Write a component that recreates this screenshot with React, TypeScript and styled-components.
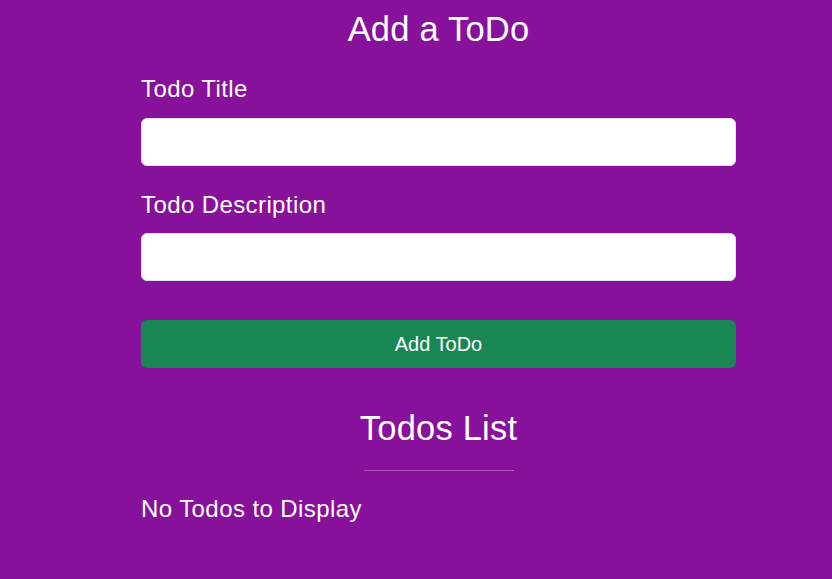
import React from "react";
import styled, { createGlobalStyle } from "styled-components";

const Global = createGlobalStyle`
  html, body {
    margin: 0;
    padding: 0;
    background: #87119a;
    font-family: "Liberation Sans", Arial, sans-serif;
    color: #ffffff;
  }
  * { box-sizing: border-box; }
`;

const Page = styled.div`
  min-height: 579px;
  background: #87119a;
  padding-left: 141px;
  padding-top: 9px;
`;

const Container = styled.div`
  width: 595px;
  display: flex;
  flex-direction: column;
`;

const Heading = styled.h1<{ $top?: number }>`
  margin: ${(p) => p.$top ?? 0}px 0 0;
  font-size: 34.5px;
  font-weight: 400;
  line-height: 41.4px;
  letter-spacing: 0.2px;
  text-align: center;
`;

const Label = styled.label<{ $top: number }>`
  display: block;
  margin-top: ${(p) => p.$top}px;
  font-size: 24px;
  line-height: 36px;
  letter-spacing: 0.4px;
`;

const Input = styled.input`
  display: block;
  width: 100%;
  height: 48px;
  margin-top: 10.6px;
  padding: 8px 16px;
  font-size: 20px;
  font-family: inherit;
  background: #ffffff;
  border: 1px solid #dee2e6;
  border-radius: 6px;
  outline: none;
`;

const Button = styled.button`
  width: 100%;
  height: 48px;
  margin-top: 39px;
  background: #198754;
  color: #ffffff;
  border: none;
  border-radius: 6px;
  font-family: inherit;
  font-size: 20px;
  cursor: pointer;
`;

const Divider = styled.hr`
  width: 150px;
  margin: 20px auto 0;
  border: 0;
  border-top: 1px solid rgba(255, 255, 255, 0.3);
  height: 0;
`;

const Empty = styled.p`
  margin: 20px 0 0;
  font-size: 24px;
  line-height: 36px;
  letter-spacing: 0.42px;
`;

export default function App() {
  return (
    <>
      <Global />
      <Page>
        <Container>
          <Heading>Add a ToDo</Heading>
          <Label $top={21} htmlFor="title">Todo Title</Label>
          <Input id="title" type="text" />
          <Label $top={20.7} htmlFor="desc">Todo Description</Label>
          <Input id="desc" type="text" />
          <Button>Add ToDo</Button>
          <Heading $top={40}>Todos List</Heading>
          <Divider />
          <Empty>No Todos to Display</Empty>
        </Container>
      </Page>
    </>
  );
}
